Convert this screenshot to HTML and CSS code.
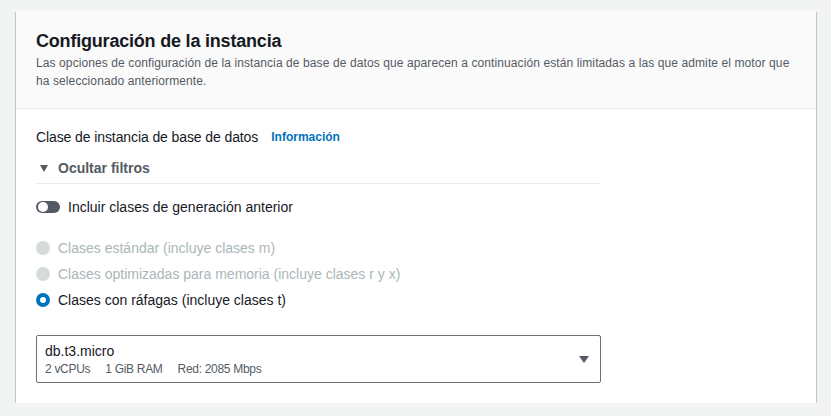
FILE: index.html
```html
<!DOCTYPE html>
<html lang="es">
<head>
<meta charset="utf-8">
<link rel="stylesheet" href="styles.css">
</head>
<body>
<div class="card">
  <div class="card-header">
    <h2 class="title">Configuración de la instancia</h2>
    <p class="desc">Las opciones de configuración de la instancia de base de datos que aparecen a continuación están limitadas a las que admite el motor que ha seleccionado anteriormente.</p>
  </div>
  <div class="card-body">
    <div class="label-row">
      <span class="label">Clase de instancia de base de datos</span>
      <span class="info">Información</span>
    </div>
    <div class="filters">
      <div class="expander"><span class="caret"></span><span>Ocultar filtros</span></div>
      <div class="toggle-row"><span class="toggle"><span class="knob"></span></span><span>Incluir clases de generación anterior</span></div>
      <div class="radios">
        <div class="radio-row disabled"><span class="radio"></span><span>Clases estándar (incluye clases m)</span></div>
        <div class="radio-row disabled"><span class="radio"></span><span>Clases optimizadas para memoria (incluye clases r y x)</span></div>
        <div class="radio-row"><span class="radio checked"></span><span>Clases con ráfagas (incluye clases t)</span></div>
      </div>
    </div>
    <div class="select">
      <div class="select-text">
        <div class="sel-main">db.t3.micro</div>
        <div class="sel-tags"><span>2 vCPUs</span><span>1 GiB RAM</span><span>Red: 2085 Mbps</span></div>
      </div>
      <span class="sel-caret"></span>
    </div>
  </div>
</div>
</body>
</html>
```

FILE: styles.css
```css
* { box-sizing: border-box; }
html, body { margin: 0; padding: 0; }
body {
  background: #f2f3f3;
  font-family: "Liberation Sans", Arial, sans-serif;
  color: #16191f;
  padding: 11px 15px 0 16px;
}
.card {
  background: #fff;
  box-shadow: 0 1px 1px 0 rgba(0,28,36,0.35), 1px 1px 1px 0 rgba(0,28,36,0.15), -1px 1px 1px 0 rgba(0,28,36,0.15);
  height: 392px;
}
.card-header {
  background: #fafafa;
  border-bottom: 1px solid #eaeded;
  padding: 19px 20px 0 20px;
  height: 98px;
}
.title {
  margin: 0;
  font-size: 18px;
  font-weight: 700;
  line-height: 22px;
  letter-spacing: -0.2px;
  color: #16191f;
}
.desc {
  margin: 2px 0 0 0;
  font-size: 12px;
  line-height: 18px;
  letter-spacing: 0.1px;
  color: #545b64;
}
.card-body {
  padding: 18px 20px 0 20px;
}
.label-row {
  display: flex;
  align-items: center;
  gap: 13px;
  height: 20px;
  font-size: 14px;
}
.label { letter-spacing: -0.1px; }
.info {
  color: #0073bb;
  font-size: 12px;
  font-weight: 700;
}
.filters { width: 564px; }
.expander {
  display: flex;
  align-items: center;
  gap: 10px;
  margin-top: 11px;
  height: 26px;
  padding: 0 0 5px 4px;
  border-bottom: 1px solid #eaeded;
  font-size: 14px;
  font-weight: 700;
  color: #545b64;
}
.caret {
  width: 0; height: 0;
  border-left: 4.5px solid transparent;
  border-right: 4.5px solid transparent;
  border-top: 7px solid #545b64;
}
.toggle-row {
  display: flex;
  align-items: center;
  gap: 8px;
  margin-top: 13px;
  height: 20px;
  font-size: 14px;
}
.toggle {
  width: 24px; height: 12px;
  border-radius: 6px;
  background: #545b64;
  position: relative;
  display: inline-block;
}
.knob {
  position: absolute;
  left: 2px; top: 1px;
  width: 10px; height: 10px;
  border-radius: 50%;
  background: #fff;
}
.radios { margin-top: 21px; display: flex; flex-direction: column; gap: 6px; }
.radio-row {
  display: flex;
  align-items: center;
  gap: 8px;
  height: 20px;
  font-size: 14px;
}
.radio-row.disabled { color: #aab7b8; }
.radio {
  width: 14px; height: 14px;
  border-radius: 50%;
  background: #d5dbdb;
  display: inline-block;
}
.radio.checked {
  background: #fff;
  border: 4px solid #0073bb;
}
.select {
  margin-top: 25px;
  width: 565px;
  height: 48px;
  border: 1px solid #687078;
  border-radius: 2px;
  display: flex;
  align-items: center;
  justify-content: space-between;
  padding: 0 11px 0 8px;
}
.sel-main { font-size: 14px; line-height: 18px; }
.sel-tags { font-size: 12px; line-height: 16px; color: #545b64; display: flex; gap: 15px; margin-top: 1px; letter-spacing: -0.3px; }
.sel-caret {
  width: 0; height: 0;
  border-left: 5px solid transparent;
  border-right: 5px solid transparent;
  border-top: 7px solid #545b64;
}
```
